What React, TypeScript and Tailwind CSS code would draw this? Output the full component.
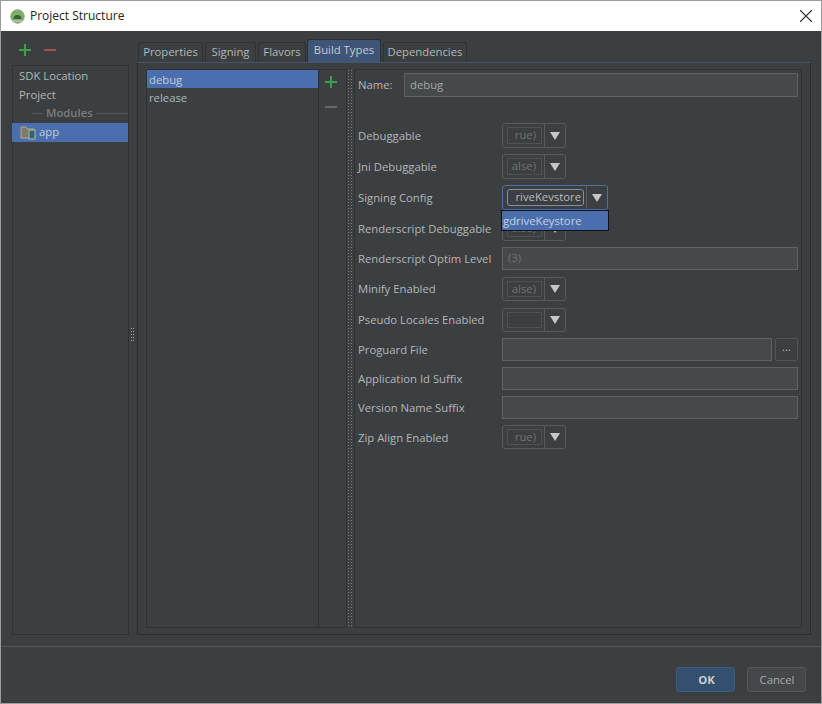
import React from "react";
import { X } from "lucide-react";

const labelFont = "font-['Open_Sans','Noto_Sans',sans-serif]";

const Plus = ({ className }: { className: string }) => (
  <svg width="14" height="14" viewBox="0 0 14 14" className={className}>
    <path d="M7 1v12M1 7h12" stroke="currentColor" strokeWidth="2" fill="none" />
  </svg>
);

const Minus = ({ className }: { className: string }) => (
  <svg width="14" height="14" viewBox="0 0 14 14" className={className}>
    <path d="M1 7h12" stroke="currentColor" strokeWidth="2" fill="none" />
  </svg>
);

const Combo = ({ text, wide, focused }: { text: string; wide?: boolean; focused?: boolean }) => (
  <div
    className={`flex h-full rounded-[3px] border ${wide ? "w-[106px]" : "w-[64px]"} ${
      focused ? "border-[#4f6f9c]" : "border-[#585b5c]"
    }`}
  >
    <div className="flex flex-1 items-center py-[3px] pl-[4px] pr-[2px]">
      <div
        className={`flex h-full flex-1 items-center justify-end overflow-hidden border ${
          focused
            ? "rounded-[3px] border-[#7f90a6] pr-[2px] text-[#bbbbbb]"
            : "border-[#4e5152] pr-[5px] text-[#6f7273]"
        }`}
      >
        {text}
      </div>
    </div>
    <div className="flex w-[21px] items-center justify-center border-l border-[#585b5c]">
      <svg width="10" height="8" viewBox="0 0 10 8">
        <path d="M0 0h10L5 8z" fill="#c4c6c7" />
      </svg>
    </div>
  </div>
);

const Field = ({ text, className = "w-full" }: { text?: string; className?: string }) => (
  <div className={`flex h-full items-center border border-[#5f6262] bg-[#45494a] pl-[5px] text-[#6f7273] ${className}`}>
    {text}
  </div>
);

const rows: { label: string; h: string; mt?: string; pad?: string; kind: string; text?: string }[] = [
  { label: "Debuggable", h: "h-[25px]", kind: "combo", text: "rue)" },
  { label: "Jni Debuggable", h: "h-[25px]", kind: "combo", text: "alse)" },
  { label: "Signing Config", h: "h-[25px]", kind: "signing", text: "riveKevstore" },
  { label: "Renderscript Debuggable", h: "h-[25px]", kind: "combo", text: "alse)" },
  { label: "Renderscript Optim Level", h: "h-[23px]", kind: "field", text: "(3)" },
  { label: "Minify Enabled", h: "h-[24px]", mt: "mt-px", pad: "pt-0", kind: "combo", text: "alse)" },
  { label: "Pseudo Locales Enabled", h: "h-[24px]", mt: "mt-px", pad: "pt-0", kind: "combo", text: "" },
  { label: "Proguard File", h: "h-[23px]", kind: "file" },
  { label: "Application Id Suffix", h: "h-[23px]", kind: "field" },
  { label: "Version Name Suffix", h: "h-[23px]", kind: "field" },
  { label: "Zip Align Enabled", h: "h-[24px]", kind: "combo", text: "rue)" },
];

const tabs = [
  { name: "Properties", w: "w-[65px]" },
  { name: "Signing", w: "w-[51px]" },
  { name: "Flavors", w: "w-[48px]" },
];

const App: React.FC = () => {
  return (
    <div className={`flex h-[704px] w-[822px] flex-col overflow-hidden border-x border-y border-[#9a9c9d] bg-[#3c3f41] text-[11.3px] text-[#b4b6b7] ${labelFont}`}>
      {/* title bar */}
      <div className="flex h-[30px] shrink-0 items-center bg-white pl-[9px] pr-[4px] text-[12px] text-[#222222]">
        <svg width="15" height="15" viewBox="0 0 15 15">
          <circle cx="7.5" cy="7.5" r="7.2" fill="#7fae6c" />
          <path d="M3.5 10a4 4 0 0 1 8 0z" fill="#3c5f3a" />
          <path d="M2 11.5h11v1.5H2z" fill="#b9c7ae" />
        </svg>
        <span className="ml-[5px] flex-1">Project Structure</span>
        <X size={22} strokeWidth={1.2} className="text-[#333333]" />
      </div>

      {/* main area */}
      <div className="flex min-h-0 flex-1 pb-[11px] pl-[11px] pr-[10px]">
        {/* modules sidebar */}
        <div className="flex w-[117px] shrink-0 flex-col">
          <div className="flex h-[34px] shrink-0 items-center gap-[11px] pl-[6px] pt-[4px]">
            <Plus className="text-[#3f9e4d]" />
            <Minus className="text-[#a5514a]" />
          </div>
          <div className="flex-1 border border-[#2f3132]">
            <div className="flex h-[19px] items-center pl-[6px] pt-px">SDK Location</div>
            <div className="flex h-[19px] items-center pl-[6px] pt-px">Project</div>
            <div className="flex h-[19px] items-center gap-[3px] pl-[19px] font-semibold text-[#7a7d7e]">
              <span className="h-px w-[11px] bg-[#55585a]" />
              Modules
              <span className="h-px flex-1 bg-[#55585a]" />
            </div>
            <div className="-ml-px flex h-[19px] items-center bg-[#4b6eaf] pl-[8px] text-[#c4cbd6]">
              <svg width="16" height="15" viewBox="0 0 16 15">
                <path d="M1 2h5l1 2h7v9H1z" fill="#7d7a6e" stroke="#b5a988" />
                <rect x="9" y="5" width="6" height="9" fill="#3f5f70" stroke="#9fc2a8" />
              </svg>
              <span className="ml-[3px]">app</span>
            </div>
          </div>
        </div>

        {/* sidebar grip */}
        <div className="flex w-[8px] shrink-0 items-center justify-center pt-[2px]">
          <div className="grid grid-cols-2 gap-x-px gap-y-[2px] pr-[2px]">
            {Array.from({ length: 10 }).map((_, i) => (
              <span key={i} className="h-px w-px bg-[#a0a2a3]" />
            ))}
          </div>
        </div>

        {/* tabbed pane */}
        <div className="flex min-w-0 flex-1 flex-col">
          <div className="flex h-[31px] shrink-0 items-end pl-px">
            {tabs.map((t) => (
              <div key={t.name} className={`mr-[2px] flex h-[20px] items-center justify-center rounded-t-[3px] border border-b-0 border-[#2f3132] bg-[#3c3f41] ${t.w}`}>
                {t.name}
              </div>
            ))}
            <div className="mr-[2px] -ml-px flex h-[23px] w-[74px] items-center justify-center rounded-t-[3px] border border-b-0 border-[#2f3132] bg-[#3f5577] pb-[2px] text-[#c4cad4]">
              Build Types
            </div>
            <div className="flex h-[20px] w-[84px] items-center justify-center rounded-t-[3px] border border-b-0 border-[#2f3132]">
              Dependencies
            </div>
          </div>

          <div className="flex min-h-0 flex-1 border border-[#2b2d2e] border-t-[#475568] px-[8px] pb-[6px] pt-[6px]">
            {/* build type list */}
            <div className="flex w-[201px] shrink-0 border border-[#2f3132]">
              <div className="w-[172px] shrink-0 border-r border-[#2f3132]">
                <div className="flex h-[18px] items-center bg-[#4b6eaf] pl-[2px] pt-[2px] text-[#c4cbd6]">debug</div>
                <div className="flex h-[18px] items-center pl-[2px] pt-[2px]">release</div>
              </div>
              <div className="flex flex-1 flex-col items-center gap-[11px] pr-[3px] pt-[5px]">
                <Plus className="text-[#3f9e4d]" />
                <Minus className="text-[#66696a]" />
              </div>
            </div>

            {/* splitter */}
            <div className="w-[7px] shrink-0 bg-[radial-gradient(#7a7c7d_0.6px,transparent_0.8px)] bg-[length:3px_3px]" />

            {/* form */}
            <div className="relative flex min-w-0 flex-1 flex-col border border-[#2f3132] pl-[3px] pr-[3px]">
              <div className="mt-[3px] flex h-[24px] shrink-0 items-center">
                <span className="w-[46px]">Name:</span>
                <Field text="debug" className="flex-1 text-[#a4a6a7]" />
              </div>
              <div className="mt-[26px] flex flex-col gap-[6px]">
                {rows.map((r) => (
                  <div key={r.label} className={`flex shrink-0 items-center ${r.h} ${r.mt ?? ""}`}>
                    <span className={`w-[144px] shrink-0 whitespace-nowrap ${r.pad ?? "pt-[2px]"}`}>{r.label}</span>
                    {r.kind === "combo" && <Combo text={r.text ?? ""} />}
                    {r.kind === "signing" && <Combo text={r.text ?? ""} wide focused />}
                    {r.kind === "field" && <Field text={r.text} className="flex-1" />}
                    {r.kind === "file" && (
                      <>
                        <Field className="flex-1" />
                        <div className="ml-[3px] flex h-full w-[23px] items-center justify-center rounded-[2px] border border-[#525556] pb-[4px] text-[#bbbbbb]">...</div>
                      </>
                    )}
                  </div>
                ))}
              </div>

              {/* open combo popup */}
              <div className="absolute left-[146px] top-[140px] flex h-[21px] w-[108px] items-center border border-[#111318] bg-[#4b6eaf] pl-px pt-[2px] text-[#c8cedb]">
                gdriveKeystore
              </div>
            </div>
          </div>
        </div>
      </div>

      {/* footer */}
      <div className="flex h-[57px] shrink-0 items-start justify-end gap-[12px] border-t border-[#55585a] pr-[15px] pt-[20px]">
        <div className="flex h-[25px] w-[59px] items-center justify-center rounded-[3px] border border-[#3f5a7d] bg-[#34506f] pl-[2px] pt-[2px] font-bold text-[#c9cfd6]">OK</div>
        <div className="flex h-[25px] w-[59px] items-center justify-center rounded-[3px] border border-[#55585a] bg-[#45484a] pl-px pt-[2px] text-[#a8aaab]">Cancel</div>
      </div>
    </div>
  );
};

export default App;
